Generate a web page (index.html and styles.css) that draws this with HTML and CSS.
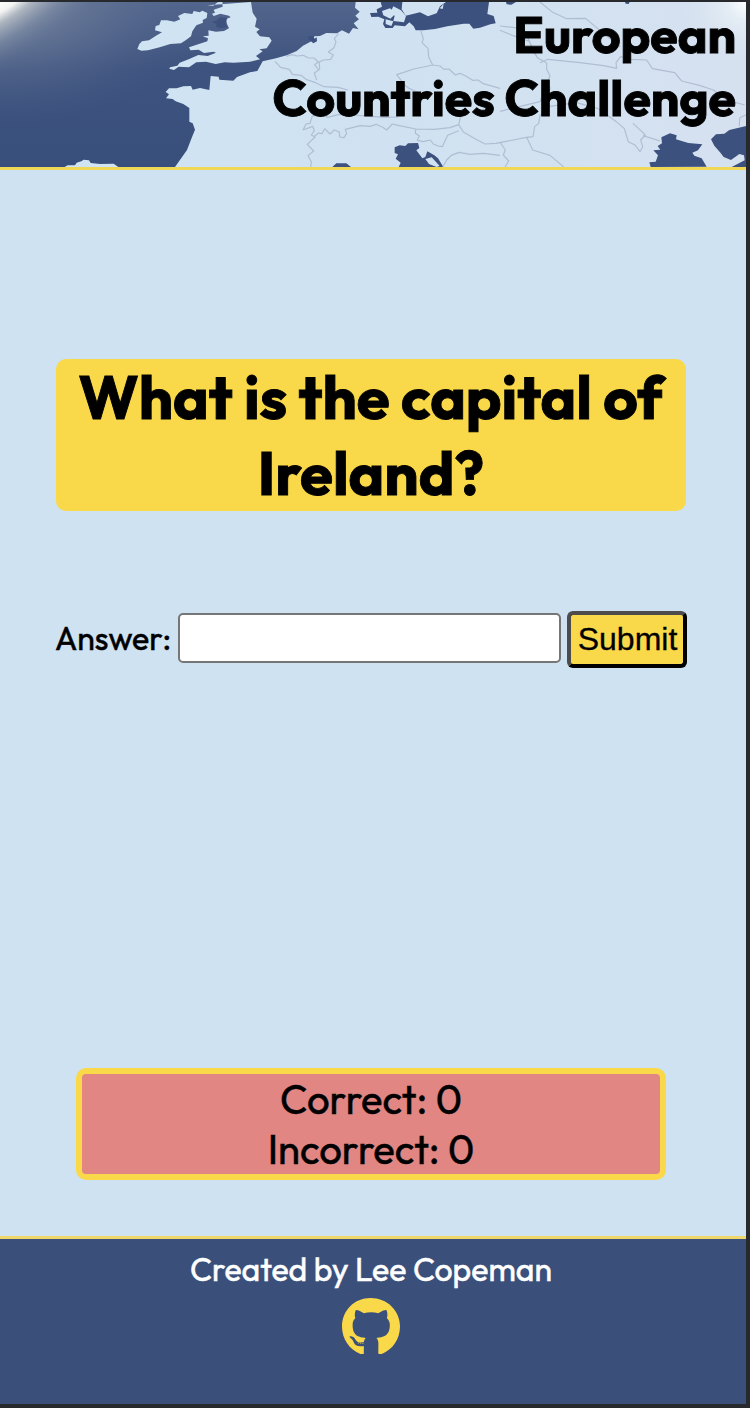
FILE: index.html
```html
<!DOCTYPE html>
<html lang="en">
<head>
<meta charset="utf-8">
<title>European Countries Challenge</title>
<link rel="stylesheet" href="styles.css">
</head>
<body>
<div class="page">
<header class="header">
<svg class="map" viewBox="0 6 2238 495" preserveAspectRatio="none" aria-hidden="true">
<defs>
<linearGradient id="sea" x1="0" y1="0" x2="0" y2="1"><stop offset="0" stop-color="#52658c"/><stop offset=".4" stop-color="#3e537f"/><stop offset="1" stop-color="#394f7b"/></linearGradient>
<radialGradient id="glow" gradientUnits="userSpaceOnUse" cx="0" cy="0" r="1" gradientTransform="rotate(-32) scale(600 190)"><stop offset="0" stop-color="#fff"/><stop offset=".17" stop-color="#f4f5f3"/><stop offset=".32" stop-color="#b4bbc4" stop-opacity=".9"/><stop offset=".6" stop-color="#7f8da6" stop-opacity=".6"/><stop offset="1" stop-color="#536990" stop-opacity="0"/></radialGradient>
<radialGradient id="corner" gradientUnits="userSpaceOnUse" cx="0" cy="0" r="1" gradientTransform="scale(640 370)"><stop offset="0" stop-color="#8794a8" stop-opacity=".9"/><stop offset=".45" stop-color="#6b7b98" stop-opacity=".55"/><stop offset="1" stop-color="#4b608a" stop-opacity="0"/></radialGradient>
<radialGradient id="shine" gradientUnits="userSpaceOnUse" cx="2238" cy="6" r="190"><stop offset="0" stop-color="#fff"/><stop offset=".3" stop-color="#e8f0f5" stop-opacity=".8"/><stop offset="1" stop-color="#dce6f2" stop-opacity="0"/></radialGradient>
<linearGradient id="land" gradientUnits="userSpaceOnUse" x1="0" y1="0" x2="2238" y2="0"><stop offset="0" stop-color="#d0e4f3"/><stop offset=".55" stop-color="#d0e2f1"/><stop offset="1" stop-color="#d6e1f0"/></linearGradient>
</defs>
<rect y="6" width="2238" height="495" fill="url(#sea)"/>
<rect y="6" width="700" height="495" fill="url(#corner)"/>
<rect y="6" width="760" height="495" fill="url(#glow)"/>
<g fill="url(#land)">
<path d="M412 147L418 132 426 124 447 121 468 107 486 97 465 91 467 78 478 75 483 61 501 61 523 65 541 58 534 48 553 39 577 42 581 33 599 37 607 32 622 39 620 54 608 60 609 68 589 76 577 94 573 109 557 121 543 130 511 132 479 142 444 151 424 152Z"/>
<path d="M621 16L640 17 653 7 667 6 668 20 641 29 645 38 636 41 641 48 661 41 687 47 692 52 678 57 681 72 687 85 672 93 648 95 625 91 626 107 608 109 624 115 622 124 567 142 571 151 596 149 612 159 641 155 648 158 623 168 595 165 566 178 539 188 532 197 510 202 508 206 522 210 536 200 567 202 589 187 618 185 647 192 674 187 700 188 750 185 780 178 768 168 788 154 778 148 800 145 815 122 808 112 780 109 769 96 779 88 765 80 770 56 758 38 753 6Z"/>
<path d="M525 501L561 450 577 409 585 389 578 370 568 365 568 324 550 312 527 304 518 297 498 295 507 283 497 276 507 265 530 265 550 259 573 258 578 269 600 264 628 270 632 228 656 230 658 239 700 242 711 231 750 217 772 213 788 184 828 175 860 166 890 153 909 137 937 122 943 109 960 108 979 99 1011 100 1026 91 1047 101 1059 84 1076 88 1061 70 1077 58 1066 47 1079 35 1065 23 1067 6 2238 6 2238 501Z"/>
<path d="M194 501L203 496 225 496 230 488 244 484 251 479 267 481 272 489 300 492 341 491 355 501Z"/>
</g>
<g fill="#3d517f">
<path d="M1142 6L1146 20 1130 28 1132 38 1110 39 1114 51 1135 50 1153 58 1149 72 1156 84 1178 84 1184 76 1215 79 1228 67 1241 79 1247 91 1270 91 1305 87 1342 79 1391 71 1408 71 1420 86 1440 83 1471 73 1487 70 1481 48 1462 42 1467 6 1338 6 1320 19 1310 40 1284 49 1260 37 1217 47 1205 28 1207 6Z"/>
<path d="M925 109L939 108 944 116 950 112 951 124 940 130 926 118Z"/>
<path d="M1518 6L1520 13 1534 14 1548 6ZM1875 6L1889 6 1886 12 1877 11Z"/>
<path d="M1184 442L1199 436 1216 438 1224 430 1254 429 1258 444 1249 451 1267 475 1276 471 1282 454 1303 466 1314 475 1330 501 1196 501 1202 488 1187 476 1194 463 1184 459ZM997 501L1009 490 1039 490 1053 501Z"/>
<path d="M1984 412L2010 400 2030 406 2028 418 2055 426 2065 429 2107 433 2094 451 2077 458 2083 467 2105 475 2120 500 1952 501 1948 487 1967 485 1974 466 1960 451 1981 449 1973 438 1986 430ZM2143 437L2133 418 2148 403 2173 401 2188 390 2238 378V501H2195L2234 481 2232 466 2218 462 2193 480 2171 471 2160 457Z"/>
<path d="M636 66L648 62 661 52 682 54 676 70 681 82 660 85 648 80 650 72Z"/>
</g>
<g fill="#d1e3f2"><path d="M1146 33L1170 25 1188 40 1171 56 1150 46ZM1180 19L1203 31 1218 48 1212 67 1180 63 1184 48 1173 34ZM1157 58L1180 64 1174 78 1157 72ZM1276 24L1284 15 1278 36 1268 39ZM1319 25L1331 12 1328 27ZM1276 477L1295 472 1319 498 1310 501 1287 492Z"/></g>
<g class="borders">
<path d="M825 184L842 202 868 208 877 223 903 226 920 239 944 247 972 260 1014 262 1044 270M950 240L943 219 956 210 944 194 955 186 942 174 925 174 910 166 892 168 875 164 859 169M959 210L958 186 970 180 992 178 1000 165 985 156 1002 143 1008 125 1003 115 1016 101M1262 91L1270 117 1266 128 1284 145 1286 171 1298 195 1270 201 1241 207 1209 218 1190 224 1201 238 1216 257 1227 265 1251 276M1298 195L1320 198 1332 208 1347 207 1366 225 1380 220 1397 228 1418 241 1434 240 1450 251 1500 265"/>
<path d="M909 390L918 372 930 370 937 348 971 344 982 352 1018 343 1060 345 1110 349 1158 352 1195 351M909 390L938 379 943 392 934 405 945 411 922 433 941 453 924 467 934 485 932 501M941 411L955 399 966 401 974 386 990 402 1003 390 1018 396 1019 411 1032 413 1040 400 1036 388 1060 382 1080 377 1111 379 1128 373 1148 382 1160 390 1177 372 1195 376 1247 387 1302 388 1350 383 1376 374 1383 345M1376 374L1390 396 1432 420 1455 432 1488 430 1580 412 1599 410 1604 380 1616 370 1620 346 1643 320 1650 260M1247 387L1246 400 1258 408 1252 421 1270 425 1291 420 1300 432 1315 438 1327 440 1343 406 1376 392M1328 501L1340 480 1354 466 1377 457 1410 463 1450 460 1500 466"/>
<path d="M1500 91L1540 107 1588 124 1600 155 1612 173 1640 189 1640 208 1650 227 1640 252 1620 305 1570 317 1500 334M1620 188L1644 178 1740 188 1810 197 1850 205 1848 188 1862 170 1895 178 1940 180 1957 206 2024 218 2045 243 2101 257 2140 270 2180 300 2234 315M1620 6L1658 37 1700 56 1757 55 1810 100 1861 140M1643 320L1730 308 1795 326 1849 365 1873 386 1885 425 1905 435 1920 455 1928 440 1922 420 1936 405 1929 398 1899 370M1929 407L1980 423M1500 426L1516 450 1510 465 1526 483 1515 501M1580 412L1598 450 1650 466 1691 501M1500 78L1570 86 1612 173M2218 378L2219 354 2238 344"/>
</g>
<rect x="1978" y="6" width="260" height="260" fill="url(#shine)"/>
</svg>
<h1 class="title"><span class="line">European</span><span class="line">Countries Challenge</span></h1>
</header>
<main class="main">
<h2 class="question"><span class="line">What is the capital of</span><span class="line">Ireland?</span></h2>
<form class="answer" onsubmit="return false">
<label class="label" for="answer">Answer:</label>
<input class="input" id="answer" type="text" autocomplete="off">
<button class="submit" type="submit">Submit</button>
</form>
<section class="score"><p class="line">Correct: 0</p><p class="line">Incorrect: 0</p></section>
</main>
<footer class="footer">
<p class="credit">Created by Lee Copeman</p>
<svg class="github" viewBox="0 0 496 486" aria-label="GitHub"><path d="M165.900 397.400c0 2-2.300 3.600-5.200 3.600-3.300.3-5.600-1.300-5.600-3.600 0-2 2.300-3.600 5.200-3.600 3-.3 5.600 1.300 5.600 3.600zm-31.100-4.500c-.7 2 1.300 4.300 4.300 4.900 2.600 1 5.600 0 6.200-2s-1.300-4.300-4.300-5.200c-2.600-.7-5.500.3-6.200 2.300zm44.200-1.700c-2.900.7-4.900 2.600-4.600 4.900.3 2 2.900 3.300 5.900 2.600 2.900-.7 4.900-2.600 4.600-4.600-.3-1.900-3-3.200-5.900-2.900zM244.800 8C106.100 8 0 113.300 0 252c0 110.900 69.800 205.800 169.500 239.200 12.800 2.300 17.300-5.600 17.300-12.100 0-6.200-.3-40.400-.3-61.400 0 0-70 15-84.700-29.800 0 0-11.400-29.100-27.800-36.600 0 0-22.900-15.700 1.600-15.400 0 0 24.900 2 38.600 25.800 21.900 38.600 58.600 27.500 72.900 20.900 2.300-16 8.800-27.100 16-33.700-55.900-6.200-112.300-14.300-112.300-110.500 0-27.500 7.600-41.300 23.600-58.900-2.600-6.500-11.100-33.300 2.600-67.900 20.900-6.500 69 27 69 27 20-5.600 41.500-8.500 62.800-8.500s42.800 2.900 62.800 8.500c0 0 48.100-33.600 69-27 13.700 34.700 5.200 61.400 2.600 67.900 16 17.700 25.800 31.500 25.800 58.900 0 96.500-58.900 104.200-114.800 110.500 9.200 7.900 17 22.900 17 46.400 0 33.700-.3 75.400-.3 83.600 0 6.500 4.600 14.400 17.300 12.100C428.200 457.800 496 362.900 496 252 496 113.300 383.500 8 244.800 8z"/></svg>
</footer>
</div>
</body>
</html>
```
FILE: styles.css
```css
* { box-sizing: border-box; }
body { margin: 0; background: #28292d; font-family: Outfit, Lato, sans-serif; color: #000; }
h1, h2, p { margin: 0; }
.page { width: 746px; height: 1404px; padding-top: 2px; display: flex; flex-direction: column; }
.header { position: relative; height: 168px; border-bottom: 3px solid #f0d755; padding: 1px 10px 0 0; }
.map { position: absolute; left: 0; top: 0; width: 746px; height: 165px; display: block; }
.borders path { fill: none; stroke: #a4b1c8; stroke-width: 3.5; stroke-linejoin: round; opacity: .75; }
.title { position: relative; text-align: right; font-size: 50px; line-height: 63px; font-weight: 700; -webkit-text-stroke: .9px; }
.line { display: block; white-space: nowrap; }
.main { flex: 1; background: #cfe2f1; display: flex; flex-direction: column; padding: 189px 59px 0 56px; }
.question { width: 630px; height: 152px; border-radius: 10px; background: #f9d849; text-align: center; font-size: 60px; line-height: 76px; font-weight: 700; -webkit-text-stroke: .9px; }
.answer { margin-top: 100px; display: flex; align-items: flex-start; height: 57px; }
.label { width: 123px; margin: 7px 0 0 -1px; font-size: 32px; line-height: 40px; font-weight: 400; white-space: nowrap; -webkit-text-stroke: .5px; }
.input { width: 383px; height: 50px; margin: 2px 6px 0 0; border: 2px solid #767676; border-radius: 5px; background: #fff; padding: 2px 4px; font: 32px "Liberation Sans", sans-serif; }
.submit { width: 120px; height: 57px; padding: 0 0 0 1px; border: 4px solid #000; border-top-color: #4c4c4c; border-left-color: #4c4c4c; border-radius: 6px; background: #f9d849; color: #000; font: 32px "Liberation Sans", Arial, sans-serif; -webkit-text-stroke: .3px; }
.score { margin: 400px 0 0 20px; width: 590px; height: 112px; border: 6px solid #f9d849; border-radius: 10px; background: #e18683; text-align: center; font-size: 40px; line-height: 50px; font-weight: 400; -webkit-text-stroke: .5px; }
.footer { height: 168px; border-top: 3px solid #f0d76b; background: #3a507b; color: #fff; display: flex; flex-direction: column; align-items: center; padding: 10px 4px 0 0; }
.credit { font-size: 32px; line-height: 40px; font-weight: 400; white-space: nowrap; -webkit-text-stroke: .5px; }
.github { width: 58px; height: 57px; margin-top: 8px; fill: #f9d849; }
```
